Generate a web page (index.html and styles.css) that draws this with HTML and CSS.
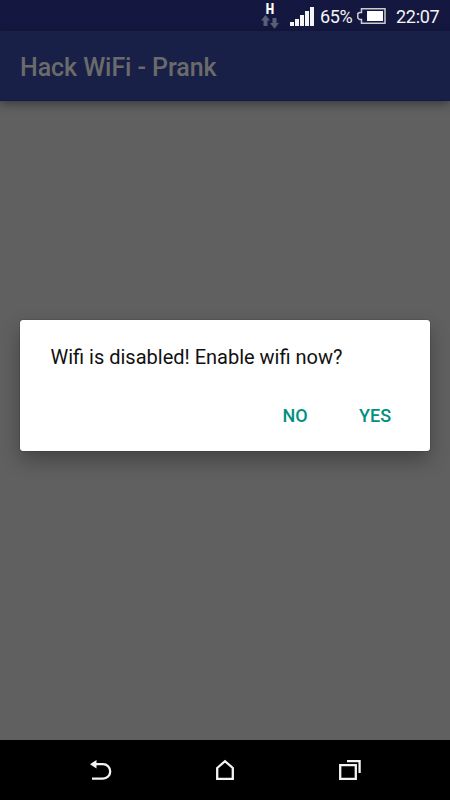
FILE: index.html
```html
<!DOCTYPE html>
<html lang="en">
<head>
    <meta charset="UTF-8">
    <meta name="viewport" content="width=device-width, initial-scale=1.0">
    <title>Hack WiFi - Prank</title>
    <link rel="stylesheet" href="styles.css">
</head>
<body>
    <div class="screen">
        <!-- Status Bar -->
        <div class="status-bar">
            <div class="network">
                <span class="network-type">H</span>
                <svg class="arrows" width="18" height="14" viewBox="0 0 18 14">
                    <path d="M4.5 0L9 5.5H6.5V11H2.5V5.5H0Z"/>
                    <path d="M11.5 3H15.5V8H18L13.5 13.7L9 8H11.5Z"/>
                </svg>
            </div>
            <svg class="signal" width="24" height="20" viewBox="0 0 24 20">
                <path d="M0 15H4V19H0ZM5 12H9V19H5ZM10 8H14V19H10ZM15 4H19V19H15ZM20 0H24V19H20Z"/>
            </svg>
            <span class="percent">65%</span>
            <svg class="battery" width="29" height="16" viewBox="0 0 29 16">
                <path class="case" d="M4.5 .8H28V15.2H4.5V11.5H2.5L.8 10V5.5L2.5 4.5H4.5Z"/>
                <path class="charge" d="M10 3H26V13H10Z"/>
            </svg>
            <span class="clock">22:07</span>
        </div>

        <!-- App Bar -->
        <header>
            <h1>Hack WiFi - Prank</h1>
        </header>

        <!-- Page with dialog -->
        <main>
            <div class="dialog">
                <p>Wifi is disabled! Enable wifi now?</p>
                <div class="dialog-buttons">
                    <button>NO</button>
                    <button>YES</button>
                </div>
            </div>
        </main>

        <!-- Navigation Bar -->
        <nav>
            <svg width="30" height="30" viewBox="0 0 30 30">
                <path d="M9 9.2H18A7.2 7.2 0 0 1 18 23.6H7"/>
                <path class="arrow-head" d="M5 9.2L11.5 5V13.4Z"/>
            </svg>
            <svg width="30" height="30" viewBox="0 0 30 30">
                <path d="M7.2 13L15 6.2L22.8 13V23.8H7.2Z"/>
            </svg>
            <svg width="30" height="30" viewBox="0 0 30 30">
                <path d="M5.2 10.2H20.8V23.8H5.2ZM12 6.2H24.6V18"/>
            </svg>
        </nav>
    </div>
</body>
</html>
```
FILE: styles.css
```css
/* General Styles */
body {
    font-family: Roboto, sans-serif;
    margin: 0;
    background-color: #000;
}

.screen {
    display: flex;
    flex-direction: column;
    width: 450px;
    height: 800px;
    overflow: hidden;
}

/* Status Bar */
.status-bar {
    display: flex;
    align-items: center;
    box-sizing: border-box;
    height: 31px;
    padding-left: 261px;
    background-color: #141840;
    color: #f4f4f4;
    font-size: 18px;
}

.network {
    display: flex;
    flex-direction: column;
    align-items: center;
    width: 18px;
    height: 26px;
    margin-right: 11px;
}

.network-type {
    font-size: 14px;
    font-weight: 900;
    line-height: 12px;
    color: #fff;
    transform: scaleX(0.85);
}

.arrows {
    fill: #5b5e79;
}

.signal {
    margin: 3px 6px 0 0;
    fill: #f4f4f4;
}

.percent {
    width: 37px;
    margin-top: 2px;
    letter-spacing: -0.4px;
}

.clock {
    margin: 2px 0 0 10px;
    letter-spacing: -0.3px;
}

.battery .case {
    fill: none;
    stroke: #ccc;
    stroke-width: 1.5;
}

.battery .charge {
    fill: #fff;
}

/* App Bar */
header {
    position: relative;
    display: flex;
    align-items: center;
    height: 70px;
    padding: 4px 20px 0;
    box-sizing: border-box;
    border-bottom: 1px solid #101a50;
    background-color: #192048;
    box-shadow: 0 3px 9px rgba(0, 0, 0, 0.4);
}

h1 {
    margin: 0;
    font-size: 25px;
    font-weight: 500;
    letter-spacing: -0.07px;
    color: #6b6b6b;
}

/* Dialog */
main {
    flex: 1;
    padding: 219px 20px 0;
    background-color: #606060;
}

.dialog {
    box-sizing: border-box;
    height: 131px;
    padding: 25px 15px 0 30.4px;
    border-radius: 3px;
    background-color: #fff;
    box-shadow: 0 0 1px #111, 0 9px 20px rgba(0, 0, 0, 0.3);
}

.dialog p {
    margin: 0;
    font-size: 20px;
    line-height: 24px;
    color: #111;
}

.dialog-buttons {
    display: flex;
    justify-content: flex-end;
    margin-top: 24px;
}

.dialog-buttons button {
    width: 80px;
    height: 44px;
    padding: 0;
    border: none;
    background: none;
    font-family: inherit;
    font-size: 18px;
    font-weight: 500;
    color: #009080;
}

/* Navigation Bar */
nav {
    display: flex;
    justify-content: space-between;
    align-items: center;
    height: 60px;
    padding: 0 85px;
    background-color: #000;
}

nav svg {
    fill: none;
    stroke: #f4f4f4;
    stroke-width: 2.3;
}

nav .arrow-head {
    fill: #f4f4f4;
    stroke: none;
}
```
